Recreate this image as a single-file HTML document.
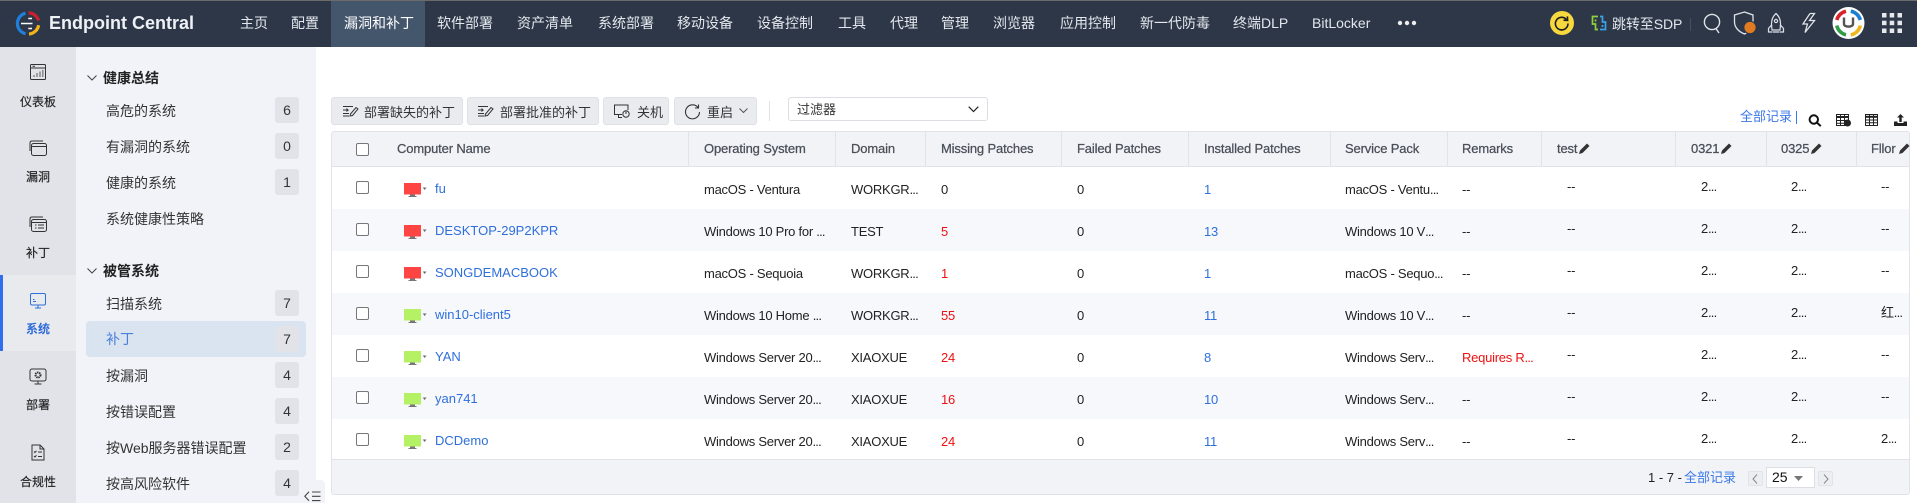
<!DOCTYPE html>
<html lang="zh"><head><meta charset="utf-8"><title>Endpoint Central</title>
<style>
*{box-sizing:border-box}
html,body{margin:0;padding:0;width:1917px;height:503px;overflow:hidden;background:#fff;font-family:"Liberation Sans","Noto Sans CJK SC",sans-serif;color:#222}
.a,.n,.rail,.s,.b,.tb,.h,.c,svg{position:absolute}
.a,.n,.s,.h,.c,.tb,.rail{white-space:nowrap}
#top{left:0;top:0;width:1917px;height:1px;background:#6b6b6b}
#nav{left:0;top:1px;width:1917px;height:46px;background:#2d3748}
#act{left:331px;top:1px;width:94px;height:46px;background:#44566c}
.n{top:1px;height:46px;line-height:45px;font-size:14px;color:#e4e8ee}
#rail{left:0;top:47px;width:76px;height:456px;background:#e1e3e8}
#railact{left:0;top:275px;width:76px;height:76px;background:#e9eaee;border-left:3px solid #2f6fed}
.rail{left:0;width:76px;text-align:center;font-size:12px;line-height:16px;color:#222;-webkit-text-stroke:.15px #222}
#panel{left:76px;top:47px;width:240px;height:456px;background:#f1f3f8}
#sel{left:86px;top:321px;width:220px;height:36px;background:#d9e4f0;border-radius:4px}
.s{left:106px;font-size:14px;line-height:20px;color:#333}
.sh{left:103px;font-weight:bold;color:#222}
.b{left:275px;width:24px;height:26px;line-height:26px;background:#e1e3e8;border-radius:3px;font-size:14px;text-align:center;color:#333}
.tb{top:97px;height:28px;background:#e9ebef;border:1px solid #dfe1e6;border-radius:3px}
.t{position:absolute;top:103px;font-size:13px;line-height:20px;color:#333}
#thead{left:331px;top:131px;width:1579px;height:36px;background:#f1f3f7;border:1px solid #e1e3e8;border-radius:3px 3px 0 0}
.sep{position:absolute;top:132px;width:1px;height:34px;background:#e1e3e8}
.h{top:131px;height:36px;line-height:35px;font-size:13px;color:#4a4f58;letter-spacing:-.15px;-webkit-text-stroke:.25px #4a4f58}
.r{position:absolute;left:331px;width:1579px;height:42px;border-left:1px solid #e1e3e8;border-right:1px solid #e1e3e8;background:#fff}
.alt{background:#f7f8fc}
.row{position:absolute;left:0;width:1917px;height:42px}
.c{top:2px;height:42px;line-height:42px;font-size:13px;color:#222;letter-spacing:-.25px}
.cb{position:absolute;left:356px;top:14px;width:13px;height:13px;border:1px solid #777;border-radius:2px;background:#fff}
.nm{left:435px;top:1px;color:#2f6fdb;letter-spacing:0}
.os{left:704px}.dm{left:851px}.mi{left:941px}.fa{left:1077px}.in{left:1204px;color:#2f6fdb}.sp{left:1345px}.re{left:1462px}
.te{left:1567px;top:-1px}.d1{left:1701px;top:-1px}.d2{left:1791px;top:-1px}.fl{left:1881px;top:-1px}
.red{color:#ee1111}
.e{letter-spacing:-.8px}
.mon{left:404px;top:16px}
</style></head><body>
<div class="a" id="top"></div>
<div class="a" id="nav"></div>
<div class="a" id="act"></div>

<svg style="left:15px;top:11px" width="26" height="25" viewBox="0 0 26 25" fill="none" stroke-width="3.2">
<path d="M10.5 2.2A10.6 10.6 0 0 0 10.5 22.8" stroke="#1f7fdc"/>
<path d="M13.5 1.9A10.6 10.6 0 0 1 23.6 9.6" stroke="#c8202d"/>
<path d="M23.6 14.2A10.6 10.6 0 0 1 14 23" stroke="#f2b519"/>
<path d="M7 12.5H18.5M14.3 7.5H18M14.3 17.5H18" stroke="#fff" stroke-width="1.6" transform="translate(-1 0)"/>
</svg>
<div class="a" style="left:49px;top:1px;line-height:45px;font-size:18px;font-weight:bold;color:#eef1f5;white-space:nowrap">Endpoint Central</div>

<div class="n" style="left:240px">主页</div>
<div class="n" style="left:291px">配置</div>
<div class="n" style="left:344px;color:#fff">漏洞和补丁</div>
<div class="n" style="left:437px">软件部署</div>
<div class="n" style="left:517px">资产清单</div>
<div class="n" style="left:598px">系统部署</div>
<div class="n" style="left:677px">移动设备</div>
<div class="n" style="left:757px">设备控制</div>
<div class="n" style="left:838px">工具</div>
<div class="n" style="left:890px">代理</div>
<div class="n" style="left:941px">管理</div>
<div class="n" style="left:993px">浏览器</div>
<div class="n" style="left:1060px">应用控制</div>
<div class="n" style="left:1140px">新一代防毒</div>
<div class="n" style="left:1233px">终端DLP</div>
<div class="n" style="left:1312px">BitLocker</div>
<svg style="left:1397px;top:20px" width="20" height="6"><circle cx="3" cy="3" r="2.2" fill="#eee"/><circle cx="10" cy="3" r="2.2" fill="#eee"/><circle cx="17" cy="3" r="2.2" fill="#eee"/></svg>

<svg style="left:1550px;top:11px" width="24" height="24" viewBox="0 0 24 24" fill="none"><circle cx="12" cy="12" r="12" fill="#f7d83f"/><path d="M16.4 8.4A6.3 6.3 0 1 0 18 12.5" stroke="#1d1d1d" stroke-width="1.6"/><path d="M13.5 9.2L17.6 9.4L17.4 5.4" stroke="#1d1d1d" stroke-width="1.6"/></svg>
<svg style="left:1591px;top:15px" width="16" height="16" viewBox="0 0 16 16" fill="none" stroke-width="1.7"><path d="M7 1.5H1.5V9H4.5V14.5H7" stroke="#8dd13f"/><path d="M9 1.5H11.5V7H14.5V14.5H9" stroke="#3aa5e6"/><path d="M4.5 4.5V6.5" stroke="#8dd13f"/><path d="M11.5 10V12" stroke="#3aa5e6"/></svg>
<div class="n" style="left:1612px;top:2px;letter-spacing:-.1px">跳转至SDP</div>
<div class="a" style="left:1690px;top:18px;width:1px;height:13px;background:#43505f"></div>
<svg style="left:1703px;top:13px" width="19" height="21" viewBox="0 0 19 21" fill="none" stroke="#dfe3e8" stroke-width="1.4"><circle cx="9" cy="9" r="7.6"/><path d="M13 15.6L16 20"/></svg>
<svg style="left:1732px;top:10px" width="26" height="26" viewBox="0 0 26 26" fill="none"><path d="M12.5 2L21 5V12C21 18 17 22 12.5 24C7.5 22 2.5 18 2.5 12V5Z" stroke="#dfe3e8" stroke-width="1.3"/><circle cx="18" cy="17.5" r="6.2" fill="#e07b22" stroke="#2d3748" stroke-width="1.2"/></svg>
<svg style="left:1767px;top:12px" width="18" height="22" viewBox="0 0 18 22" fill="none" stroke="#dfe3e8" stroke-width="1.2"><path d="M9 1.5C12.5 4.5 13.5 8 13.5 12L13 18H5L4.5 12C4.5 8 5.5 4.5 9 1.5Z"/><circle cx="9" cy="9" r="1.6"/><path d="M4.5 13L1.5 16.5V20H5.5M13.5 13L16.5 16.5V20H12.5M6 20H12"/></svg>
<svg style="left:1800px;top:12px" width="17" height="22" viewBox="0 0 17 22" fill="none" stroke="#dfe3e8" stroke-width="1.3"><path d="M10 1.5L3 12H7.5L5 20.5L14.5 8.5H9.5L14.5 1.5H10"/></svg>
<svg style="left:1832px;top:7px" width="33" height="32" viewBox="0 0 33 32" fill="none"><circle cx="16.5" cy="16" r="16" fill="#fff"/><g stroke-width="3.6"><path d="M4.8 13A12.2 12.2 0 0 1 14 4.2" stroke="#d8232a"/><path d="M18.8 4.2A12.2 12.2 0 0 1 28.3 13" stroke="#1b7fd4"/><path d="M28.3 18.5A12.2 12.2 0 0 1 18.8 27.9" stroke="#f0b71c"/><path d="M14 27.9A12.2 12.2 0 0 1 4.8 18.5" stroke="#2f9e44"/></g><path d="M12 10.5V17C12 20.5 21 20.5 21 17V10.5" stroke="#555" stroke-width="2.4"/></svg>
<svg style="left:1882px;top:13px" width="20" height="20" fill="#e6e8ec"><rect width="4.5" height="4.5"/><rect x="7.7" width="4.5" height="4.5"/><rect x="15.5" width="4.5" height="4.5"/><rect y="7.7" width="4.5" height="4.5"/><rect x="7.7" y="7.7" width="4.5" height="4.5"/><rect x="15.5" y="7.7" width="4.5" height="4.5"/><rect y="15.5" width="4.5" height="4.5"/><rect x="7.7" y="15.5" width="4.5" height="4.5"/><rect x="15.5" y="15.5" width="4.5" height="4.5"/></svg>

<div class="a" id="rail"></div>
<div class="a" id="railact"></div>
<svg style="left:30px;top:64px" width="16" height="16" viewBox="0 0 16 16" fill="none" stroke="#333"><rect x=".5" y=".5" width="15" height="15" rx="1"/><path d="M.5 4H15.5M2.5 2.2H5"/><path d="M4 13V11M7 13V9M10 13V7.5M12.8 13V6" stroke="#888" stroke-width="1.5"/></svg>
<div class="rail" style="top:94px">仪表板</div>
<svg style="left:29px;top:140px" width="18" height="16" viewBox="0 0 18 16" fill="none" stroke="#333"><rect x="2.5" y="3.5" width="15" height="12" rx="2"/><path d="M2.5 6.5H17.5M1 11V3C1 1.8 1.8 1 3 1H14"/></svg>
<div class="rail" style="top:169px">漏洞</div>
<svg style="left:29px;top:216px" width="18" height="16" viewBox="0 0 18 16" fill="none" stroke="#333"><rect x="2.5" y="3.5" width="15" height="12" rx="2"/><path d="M2.5 6.5H17.5M1 11V3C1 1.8 1.8 1 3 1H14M6 9H7.5M9 9H15M6 12H7.5M9 12H15"/></svg>
<div class="rail" style="top:245px">补丁</div>
<svg style="left:29px;top:292px" width="18" height="17" viewBox="0 0 18 17" fill="none" stroke="#2f6fdb"><rect x="1.5" y="1.5" width="15" height="11.5" rx="1.5"/><path d="M9 13V15.5M6 16H12M4 9.5H7M4 7.5H5.5" /></svg>
<div class="rail" style="top:321px;color:#2e6bd8;font-weight:bold;-webkit-text-stroke:0">系统</div>
<svg style="left:29px;top:368px" width="18" height="17" viewBox="0 0 18 17" fill="none" stroke="#333"><rect x="1" y="1" width="16" height="12" rx="2"/><path d="M9 13V16M5.5 16H12.5"/><circle cx="9" cy="7" r="2.5" stroke-width="2" stroke-dasharray="1.4 .7"/></svg>
<div class="rail" style="top:397px">部署</div>
<svg style="left:31px;top:444px" width="14" height="17" viewBox="0 0 14 17" fill="none" stroke="#333"><path d="M1 1H9L13 5V16H1Z"/><path d="M9 1V5H13M3 7.5L4 8.5L5.5 6.8M7 8H11M3 12L4 13L5.5 11.3M7 12.5H11"/></svg>
<div class="rail" style="top:474px">合规性</div>

<div class="a" id="panel"></div>
<div class="a" id="sel"></div>
<svg style="left:87px;top:75px" width="10" height="6" fill="none" stroke="#444"><path d="M.5 .5L5 5L9.5 .5"/></svg>
<div class="s sh" style="top:68px">健康总结</div>
<div class="s" style="top:101px">高危的系统</div><div class="b" style="top:97px">6</div>
<div class="s" style="top:137px">有漏洞的系统</div><div class="b" style="top:133px">0</div>
<div class="s" style="top:173px">健康的系统</div><div class="b" style="top:169px">1</div>
<div class="s" style="top:209px">系统健康性策略</div>
<svg style="left:87px;top:268px" width="10" height="6" fill="none" stroke="#444"><path d="M.5 .5L5 5L9.5 .5"/></svg>
<div class="s sh" style="top:261px">被管系统</div>
<div class="s" style="top:294px">扫描系统</div><div class="b" style="top:290px">7</div>
<div class="s" style="top:329px;color:#4a80d9">补丁</div><div class="b" style="top:326px">7</div>
<div class="s" style="top:366px">按漏洞</div><div class="b" style="top:362px">4</div>
<div class="s" style="top:402px">按错误配置</div><div class="b" style="top:398px">4</div>
<div class="s" style="top:438px">按Web服务器错误配置</div><div class="b" style="top:434px">2</div>
<div class="s" style="top:474px">按高风险软件</div><div class="b" style="top:470px">4</div>
<div class="a" style="left:302px;top:480px;width:23px;height:23px;background:#f1f3f8;border-radius:0 4px 0 0"></div>
<svg style="left:304px;top:491px" width="17" height="11" fill="none" stroke="#444" stroke-width="1.1"><path d="M5 .8L.8 5.3L5 9.8M8 1H16.5M8 5.3H16.5M8 9.6H16.5"/></svg>

<div class="tb" style="left:331px;width:132px"></div>
<svg style="left:342px;top:105px" width="17" height="12" viewBox="0 0 17 12" fill="none" stroke="#333"><path d="M1 1.5H11M1 8.5H7M1 5H6L4.5 3.5M6 5L4.5 6.5M1 11H7"/><path d="M8.5 9L14 2.5L16 4L10.5 10.5L8 11Z"/></svg>
<div class="t" style="left:364px">部署缺失的补丁</div>
<div class="tb" style="left:467px;width:132px"></div>
<svg style="left:477px;top:105px" width="17" height="12" viewBox="0 0 17 12" fill="none" stroke="#333"><path d="M1 1.5H11M1 8.5H7M1 5H6L4.5 3.5M6 5L4.5 6.5M1 11H7"/><path d="M8.5 9L14 2.5L16 4L10.5 10.5L8 11Z"/></svg>
<div class="t" style="left:500px">部署批准的补丁</div>
<div class="tb" style="left:603px;width:66px"></div>
<svg style="left:613px;top:104px" width="18" height="15" viewBox="0 0 18 15" fill="none" stroke="#333"><path d="M9 10.5H1.5V1H15V6M5 13.5H9M5.5 10.5V13.5"/><circle cx="13" cy="10" r="3.2"/><path d="M13 7.5V10"/></svg>
<div class="t" style="left:637px">关机</div>
<div class="tb" style="left:674px;width:83px"></div>
<svg style="left:684px;top:104px" width="17" height="16" viewBox="0 0 17 16" fill="none" stroke="#333" stroke-width="1.1"><path d="M14 3.5A7 7 0 1 0 15.5 8"/><path d="M14.5 .5V4H11"/></svg>
<div class="t" style="left:707px">重启</div>
<svg style="left:739px;top:108px" width="9" height="6" fill="none" stroke="#555"><path d="M.5 .5L4.5 4.5L8.5 .5"/></svg>
<div class="a" style="left:769px;top:101px;width:1px;height:20px;background:#dfe1e6"></div>
<div class="a" style="left:788px;top:97px;width:200px;height:24px;background:#fff;border:1px solid #dcdee3;border-radius:3px"></div>
<div class="t" style="left:797px;top:100px">过滤器</div>
<svg style="left:968px;top:106px" width="11" height="7" fill="none" stroke="#222" stroke-width="1.2"><path d="M.7 .7L5.5 5.5L10.3 .7"/></svg>

<div class="t" style="left:1740px;top:107px;color:#3b78e7">全部记录</div>
<div class="a" style="left:1796px;top:111px;width:1px;height:13px;background:#3b78e7"></div>
<svg style="left:1808px;top:114px" width="14" height="13" viewBox="0 0 14 13" fill="none" stroke="#111" stroke-width="2"><circle cx="5.8" cy="5.5" r="4.2"/><path d="M8.8 8.5L12.8 12.2"/></svg>
<svg style="left:1836px;top:114px" width="15" height="13" viewBox="0 0 15 13" fill="none" stroke="#222"><rect x=".5" y=".5" width="12" height="11"/><path d="M.5 3H12.5" stroke-width="2"/><path d="M.5 6.5H12.5M.5 9.3H12.5M4.5 .5V11.5M8.5 .5V11.5"/><circle cx="11.5" cy="9" r="3" fill="#222"/></svg>
<svg style="left:1865px;top:114px" width="13" height="12" viewBox="0 0 13 12" fill="none" stroke="#222"><rect x=".5" y=".5" width="12" height="11"/><path d="M.5 2.8H12.5" stroke-width="2"/><path d="M.5 6H12.5M.5 8.8H12.5M4.5 .5V11.5M8.5 .5V11.5"/></svg>
<svg style="left:1894px;top:114px" width="13" height="12" viewBox="0 0 13 12"><path d="M6.5 0L10 3.5H7.7V8H5.3V3.5H3Z" fill="#222"/><path d="M0 7.5H3.5V9H9.5V7.5H13V12H0Z" fill="#222"/></svg>

<div class="a" id="thead"></div>
<i class="sep" style="left:688px"></i><i class="sep" style="left:835px"></i><i class="sep" style="left:925px"></i><i class="sep" style="left:1061px"></i><i class="sep" style="left:1188px"></i><i class="sep" style="left:1330px"></i><i class="sep" style="left:1447px"></i><i class="sep" style="left:1541px"></i><i class="sep" style="left:1675px"></i><i class="sep" style="left:1766px"></i><i class="sep" style="left:1856px"></i>
<div class="a" style="left:356px;top:143px;width:13px;height:13px;border:1px solid #777;border-radius:2px;background:#fff"></div>
<div class="h" style="left:397px">Computer Name</div>
<div class="h" style="left:704px">Operating System</div>
<div class="h" style="left:851px">Domain</div>
<div class="h" style="left:941px">Missing Patches</div>
<div class="h" style="left:1077px">Failed Patches</div>
<div class="h" style="left:1204px">Installed Patches</div>
<div class="h" style="left:1345px">Service Pack</div>
<div class="h" style="left:1462px">Remarks</div>
<div class="h" style="left:1557px">test</div>
<div class="h" style="left:1691px">0321</div>
<div class="h" style="left:1781px">0325</div>
<div class="h" style="left:1871px">Fllor</div>
<svg style="left:1579px;top:143px" width="11" height="11"><path d="M0 11L1 7.5L8 .5L10.5 3L3.5 10Z" fill="#333"/></svg>
<svg style="left:1721px;top:143px" width="11" height="11"><path d="M0 11L1 7.5L8 .5L10.5 3L3.5 10Z" fill="#333"/></svg>
<svg style="left:1811px;top:143px" width="11" height="11"><path d="M0 11L1 7.5L8 .5L10.5 3L3.5 10Z" fill="#333"/></svg>
<svg style="left:1899px;top:143px" width="11" height="11"><path d="M0 11L1 7.5L8 .5L10.5 3L3.5 10Z" fill="#333"/></svg>

<div class="r" style="top:167px"></div><div class="r alt" style="top:209px"></div><div class="r" style="top:251px"></div><div class="r alt" style="top:293px"></div><div class="r" style="top:335px"></div><div class="r alt" style="top:377px"></div><div class="r" style="top:419px;height:40px"></div>

<div class="row" style="top:167px"><i class="cb"></i>
<svg class="mon" width="23" height="15"><rect width="17" height="11.5" fill="#f44"/><rect x="6" y="11.5" width="5" height="1.5" fill="#777"/><rect x="4.5" y="13" width="8" height="1" fill="#777"/><path d="M18.8 4.5H22.5L20.6 7Z" fill="#666"/></svg>
<span class="c nm">fu</span><span class="c os">macOS - Ventura</span><span class="c dm">WORKGR<span class="e">...</span></span><span class="c mi">0</span><span class="c fa">0</span><span class="c in">1</span><span class="c sp">macOS - Ventu<span class="e">...</span></span><span class="c re">--</span><span class="c te">--</span><span class="c d1">2<span class="e">...</span></span><span class="c d2">2<span class="e">...</span></span><span class="c fl">--</span></div>
<div class="row" style="top:209px"><i class="cb"></i>
<svg class="mon" width="23" height="15"><rect width="17" height="11.5" fill="#f44"/><rect x="6" y="11.5" width="5" height="1.5" fill="#777"/><rect x="4.5" y="13" width="8" height="1" fill="#777"/><path d="M18.8 4.5H22.5L20.6 7Z" fill="#666"/></svg>
<span class="c nm">DESKTOP-29P2KPR</span><span class="c os">Windows 10 Pro for <span class="e">...</span></span><span class="c dm">TEST</span><span class="c mi red">5</span><span class="c fa">0</span><span class="c in">13</span><span class="c sp">Windows 10 V<span class="e">...</span></span><span class="c re">--</span><span class="c te">--</span><span class="c d1">2<span class="e">...</span></span><span class="c d2">2<span class="e">...</span></span><span class="c fl">--</span></div>
<div class="row" style="top:251px"><i class="cb"></i>
<svg class="mon" width="23" height="15"><rect width="17" height="11.5" fill="#f44"/><rect x="6" y="11.5" width="5" height="1.5" fill="#777"/><rect x="4.5" y="13" width="8" height="1" fill="#777"/><path d="M18.8 4.5H22.5L20.6 7Z" fill="#666"/></svg>
<span class="c nm">SONGDEMACBOOK</span><span class="c os">macOS - Sequoia</span><span class="c dm">WORKGR<span class="e">...</span></span><span class="c mi red">1</span><span class="c fa">0</span><span class="c in">1</span><span class="c sp">macOS - Sequo<span class="e">...</span></span><span class="c re">--</span><span class="c te">--</span><span class="c d1">2<span class="e">...</span></span><span class="c d2">2<span class="e">...</span></span><span class="c fl">--</span></div>
<div class="row" style="top:293px"><i class="cb"></i>
<svg class="mon" width="23" height="15"><rect width="17" height="11.5" fill="#b4f165"/><rect x="6" y="11.5" width="5" height="1.5" fill="#777"/><rect x="4.5" y="13" width="8" height="1" fill="#777"/><path d="M18.8 4.5H22.5L20.6 7Z" fill="#666"/></svg>
<span class="c nm">win10-client5</span><span class="c os">Windows 10 Home <span class="e">...</span></span><span class="c dm">WORKGR<span class="e">...</span></span><span class="c mi red">55</span><span class="c fa">0</span><span class="c in">11</span><span class="c sp">Windows 10 V<span class="e">...</span></span><span class="c re">--</span><span class="c te">--</span><span class="c d1">2<span class="e">...</span></span><span class="c d2">2<span class="e">...</span></span><span class="c fl">红<span class="e">...</span></span></div>
<div class="row" style="top:335px"><i class="cb"></i>
<svg class="mon" width="23" height="15"><rect width="17" height="11.5" fill="#b4f165"/><rect x="6" y="11.5" width="5" height="1.5" fill="#777"/><rect x="4.5" y="13" width="8" height="1" fill="#777"/><path d="M18.8 4.5H22.5L20.6 7Z" fill="#666"/></svg>
<span class="c nm">YAN</span><span class="c os">Windows Server 20<span class="e">...</span></span><span class="c dm">XIAOXUE</span><span class="c mi red">24</span><span class="c fa">0</span><span class="c in">8</span><span class="c sp">Windows Serv<span class="e">...</span></span><span class="c re red">Requires R<span class="e">...</span></span><span class="c te">--</span><span class="c d1">2<span class="e">...</span></span><span class="c d2">2<span class="e">...</span></span><span class="c fl">--</span></div>
<div class="row" style="top:377px"><i class="cb"></i>
<svg class="mon" width="23" height="15"><rect width="17" height="11.5" fill="#b4f165"/><rect x="6" y="11.5" width="5" height="1.5" fill="#777"/><rect x="4.5" y="13" width="8" height="1" fill="#777"/><path d="M18.8 4.5H22.5L20.6 7Z" fill="#666"/></svg>
<span class="c nm">yan741</span><span class="c os">Windows Server 20<span class="e">...</span></span><span class="c dm">XIAOXUE</span><span class="c mi red">16</span><span class="c fa">0</span><span class="c in">10</span><span class="c sp">Windows Serv<span class="e">...</span></span><span class="c re">--</span><span class="c te">--</span><span class="c d1">2<span class="e">...</span></span><span class="c d2">2<span class="e">...</span></span><span class="c fl">--</span></div>
<div class="row" style="top:419px"><i class="cb"></i>
<svg class="mon" width="23" height="15"><rect width="17" height="11.5" fill="#b4f165"/><rect x="6" y="11.5" width="5" height="1.5" fill="#777"/><rect x="4.5" y="13" width="8" height="1" fill="#777"/><path d="M18.8 4.5H22.5L20.6 7Z" fill="#666"/></svg>
<span class="c nm">DCDemo</span><span class="c os">Windows Server 20<span class="e">...</span></span><span class="c dm">XIAOXUE</span><span class="c mi red">24</span><span class="c fa">0</span><span class="c in">11</span><span class="c sp">Windows Serv<span class="e">...</span></span><span class="c re">--</span><span class="c te">--</span><span class="c d1">2<span class="e">...</span></span><span class="c d2">2<span class="e">...</span></span><span class="c fl">2<span class="e">...</span></span></div>

<div class="a" style="left:331px;top:459px;width:1579px;height:36px;background:#f1f3f7;border:1px solid #e1e3e8;border-radius:0 0 3px 3px"></div>
<div class="t" style="left:1648px;top:468px;color:#222">1 - 7 -</div>
<div class="t" style="left:1684px;top:468px;color:#3b78e7">全部记录</div>
<div class="a" style="left:1748px;top:471px;width:15px;height:15px;background:#eceef2;border:1px solid #e1e3e8;border-radius:2px"></div>
<svg style="left:1752px;top:474px" width="6" height="10" fill="none" stroke="#888"><path d="M5 .5L1 5L5 9.5"/></svg>
<div class="a" style="left:1766px;top:467px;width:49px;height:21px;background:#fff;border:1px solid #dcdee3"></div>
<div class="a" style="left:1772px;top:467px;line-height:20px;font-size:14px;color:#111">25</div>
<svg style="left:1794px;top:476px" width="9" height="5"><path d="M0 0H9L4.5 5Z" fill="#777"/></svg>
<div class="a" style="left:1818px;top:471px;width:15px;height:15px;background:#eceef2;border:1px solid #e1e3e8;border-radius:2px"></div>
<svg style="left:1823px;top:474px" width="6" height="10" fill="none" stroke="#888"><path d="M1 .5L5 5L1 9.5"/></svg>
</body></html>
